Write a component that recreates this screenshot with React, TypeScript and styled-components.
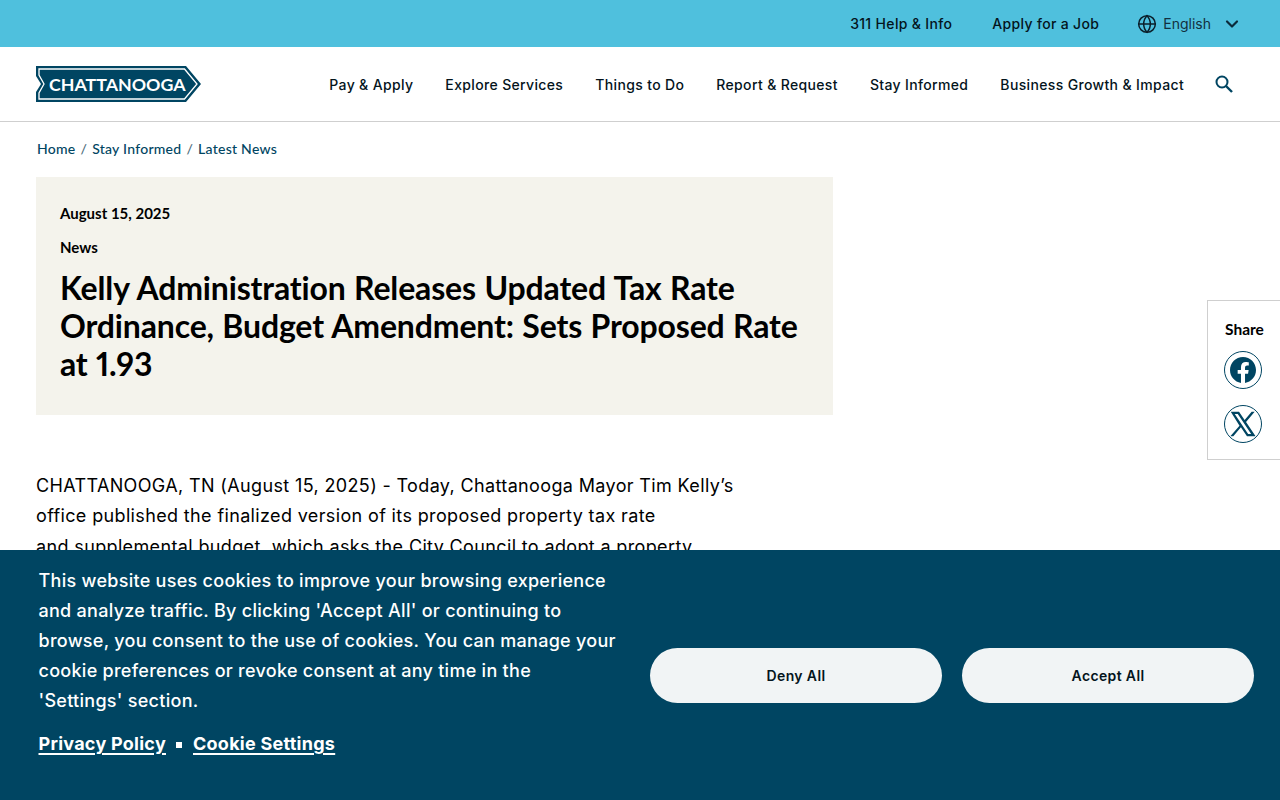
import React from "react";
import styled, { createGlobalStyle } from "styled-components";
import { Globe, ChevronDown } from "lucide-react";

const Global = createGlobalStyle`
  html, body { margin: 0; padding: 0; height: 100%; overflow: hidden; background: #fff; }
  body { font-family: Inter, "Liberation Sans", sans-serif; color: #000; }
  a { color: inherit; text-decoration: none; }
`;

const Page = styled.div`
  height: 800px;
  overflow: hidden;
`;

const TopBar = styled.div`
  height: 47px;
  background: #4fc0dd;
  display: flex;
  justify-content: flex-end;
  align-items: center;
  padding-right: 38px;
  color: #04141c;
  font-size: 14px;
  font-weight: 500;
`;

const TopLink = styled.a`
  margin-right: 40px;
  letter-spacing: 0.33px;
`;

const Lang = styled.div`
  display: flex;
  align-items: center;
  font-weight: 400;
  color: #12303f;
  svg:first-child { margin-right: 6px; color: #0b1f2a; margin-left: -2px; }
  svg:last-child { margin-left: 11px; color: #0b2a3a; }
`;

const Header = styled.header`
  height: 74px;
  border-bottom: 1px solid #cfcfcf;
  display: flex;
  align-items: center;
  justify-content: space-between;
  padding: 0 47px 0 36px;
`;

const Nav = styled.nav`
  display: flex;
  align-items: center;
  gap: 32px;
  font-size: 14px;
  font-weight: 500;
  color: #04141c;
  letter-spacing: 0.35px;
  svg { margin-left: -1px; display: block; }
`;

const Crumbs = styled.div`
  display: flex;
  gap: 5px;
  padding: 18px 0 0 37px;
  box-sizing: border-box;
  height: 55px;
  font-family: Lato, sans-serif;
  font-size: 14px;
  font-weight: 500;
  line-height: 17px;
  letter-spacing: 0.26px;
  color: #004562;
`;

const Sep = styled.span`
  color: #4a6a7a;
`;

const Hero = styled.section`
  margin-left: 36px;
  width: 797px;
  height: 238px;
  box-sizing: border-box;
  padding: 26px 24px 0;
  background: #f4f3ec;
`;

const Meta = styled.div`
  font-family: Lato, sans-serif;
  font-size: 15px;
  font-weight: 700;
  line-height: 20px;
  margin-bottom: 14px;
`;

const Title = styled.h1`
  margin: -2px 0 0;
  font-family: Lato, sans-serif;
  font-size: 32px;
  font-weight: 700;
  line-height: 38px;
  font-variant-ligatures: none;
  font-variant-numeric: proportional-nums;
  letter-spacing: -0.15px;
  word-spacing: 0.8px;
`;

const Body = styled.p`
  margin: 56px 0 0 36px;
  width: 720px;
  font-size: 18px;
  line-height: 30.400px;
  letter-spacing: 0.36px;
  color: #000;
`;

const Share = styled.aside`
  position: fixed;
  right: 0;
  top: 300px;
  width: 73px;
  height: 160px;
  box-sizing: border-box;
  border: 1px solid #cfcfcf;
  border-right: none;
  background: #fff;
  display: flex;
  flex-direction: column;
  align-items: flex-start;
  padding: 19px 0 0 16px;
  font-family: Lato, sans-serif;
  font-size: 15.500px;
  font-weight: 700;
  line-height: 18px;
`;

const ShareLabel = styled.span`
  margin-left: 1px;
`;

const Circle = styled.a<{ $top: number }>`
  width: 38px;
  height: 38px;
  box-sizing: border-box;
  border: 1px solid #004562;
  border-radius: 50%;
  margin-top: ${(p) => p.$top}px;
  display: flex;
  align-items: center;
  justify-content: center;
`;

const Cookie = styled.div`
  position: fixed;
  left: 0;
  right: 0;
  bottom: 0;
  height: 250px;
  background: #004562;
  color: #fff;
  display: flex;
  padding: 16px 26px 0 38.500px;
  box-sizing: border-box;
`;

const CookieText = styled.div`
  width: 611.500px;
  flex: none;
  font-size: 18px;
  font-weight: 500;
  line-height: 30px;
  letter-spacing: 0.28px;
`;

const Links = styled.div`
  margin-top: 13px;
  display: flex;
  align-items: center;
  font-size: 18px;
  font-weight: 700;
  letter-spacing: 0.26px;
  a { text-decoration: underline; text-decoration-thickness: 1.500px; text-underline-offset: 2.500px; }
`;

const Dot = styled.span`
  width: 6px;
  height: 6px;
  margin: 2px 11px 0 10px;
  background: #fff;
`;

const Buttons = styled.div`
  flex: 1;
  display: flex;
  gap: 20px;
  padding-top: 82px;
`;

const Button = styled.button`
  flex: 1;
  height: 55px;
  border: none;
  border-radius: 28px;
  background: #f1f4f5;
  color: #04141c;
  font-family: inherit;
  font-size: 14px;
  font-weight: 600;
  letter-spacing: 0.36px;
`;

const LogoWrap = styled.div`
  position: relative;
  width: 165px;
  height: 36px;
  svg { display: block; }
`;

const LogoText = styled.span`
  position: absolute;
  left: 13px;
  top: 7px;
  font-family: Lato, sans-serif;
  font-size: 17.800px;
  line-height: 22px;
  font-weight: 700;
  color: #fff;
  white-space: nowrap;
`;

const Logo = () => (
  <LogoWrap>
    <svg width="165" height="36" viewBox="0 0 165 36">
      <path d="M0 0H150L165 18L150 36H0V26L5 18L0 10Z" fill="#004562" />
      <path d="M3 3H148.500L161 18L148.500 33H3V27L8 18L3 9Z" fill="none" stroke="#fff" strokeWidth="1.300" />
    </svg>
    <LogoText>CHATTANOOGA</LogoText>
  </LogoWrap>
);

const SearchIcon = () => (
  <svg width="18" height="18" viewBox="0 0 18 18" fill="none" stroke="#004562" strokeWidth="2">
    <circle cx="7" cy="7" r="5.500" />
    <path d="M11 11L17 17" strokeWidth="2.400" />
  </svg>
);

export default function App() {
  return (
    <Page>
      <Global />
      <TopBar>
        <TopLink>311 Help &amp; Info</TopLink>
        <TopLink>Apply for a Job</TopLink>
        <Lang>
          <Globe size={20} strokeWidth={1.800} />
          English
          <ChevronDown size={20} strokeWidth={2.600} />
        </Lang>
      </TopBar>
      <Header>
        <Logo />
        <Nav>
          <a>Pay &amp; Apply</a>
          <a>Explore Services</a>
          <a>Things to Do</a>
          <a>Report &amp; Request</a>
          <a>Stay Informed</a>
          <a>Business Growth &amp; Impact</a>
          <SearchIcon />
        </Nav>
      </Header>
      <Crumbs>
        <a>Home</a><Sep>/</Sep><a>Stay Informed</a><Sep>/</Sep><a>Latest News</a>
      </Crumbs>
      <Hero>
        <Meta>August 15, 2025</Meta>
        <Meta>News</Meta>
        <Title>Kelly Administration Releases Updated Tax Rate Ordinance, Budget Amendment: Sets Proposed Rate at 1.93</Title>
      </Hero>
      <Body>
        CHATTANOOGA, TN (August 15, 2025) - Today, Chattanooga Mayor Tim Kelly’s<br />
        office published the finalized version of its proposed property tax rate<br />
        and supplemental budget, which asks the City Council to adopt a property
      </Body>
      <Share>
        <ShareLabel>Share</ShareLabel>
        <Circle $top={13}>
          <svg width="26" height="26" viewBox="0 0 24 24" fill="#004562">
            <path d="M24 12.070C24 5.400 18.630 0 12 0S0 5.400 0 12.070c0 6.030 4.390 11.020 10.130 11.930v-8.440H7.080v-3.490h3.050V9.410c0-3.020 1.790-4.690 4.530-4.690 1.310 0 2.680.24 2.680.24v2.970h-1.510c-1.490 0-1.960.93-1.960 1.880v2.260h3.330l-.53 3.490h-2.800V24C19.610 23.090 24 18.100 24 12.070z" />
          </svg>
        </Circle>
        <Circle $top={16}>
          <svg width="28" height="28" viewBox="0 0 24 24" fill="#004562">
            <path fillRule="evenodd" d="M1.500 1.500H8.600L13.400 8.600L19.400 1.500H22L14.600 10.200L22.800 22.500H15.400L10.200 14.800L3.700 22.500H1.100L9 13.400ZM4.900 3.400L16.400 20.600H19L7.500 3.400Z" />
          </svg>
        </Circle>
      </Share>
      <Cookie>
        <CookieText>
          This website uses cookies to improve your browsing experience<br />
          and analyze traffic. By clicking 'Accept All' or continuing to<br />
          browse, you consent to the use of cookies. You can manage your<br />
          cookie preferences or revoke consent at any time in the<br />
          'Settings' section.
          <Links>
            <a>Privacy Policy</a><Dot /><a>Cookie Settings</a>
          </Links>
        </CookieText>
        <Buttons>
          <Button>Deny All</Button>
          <Button>Accept All</Button>
        </Buttons>
      </Cookie>
    </Page>
  );
}
